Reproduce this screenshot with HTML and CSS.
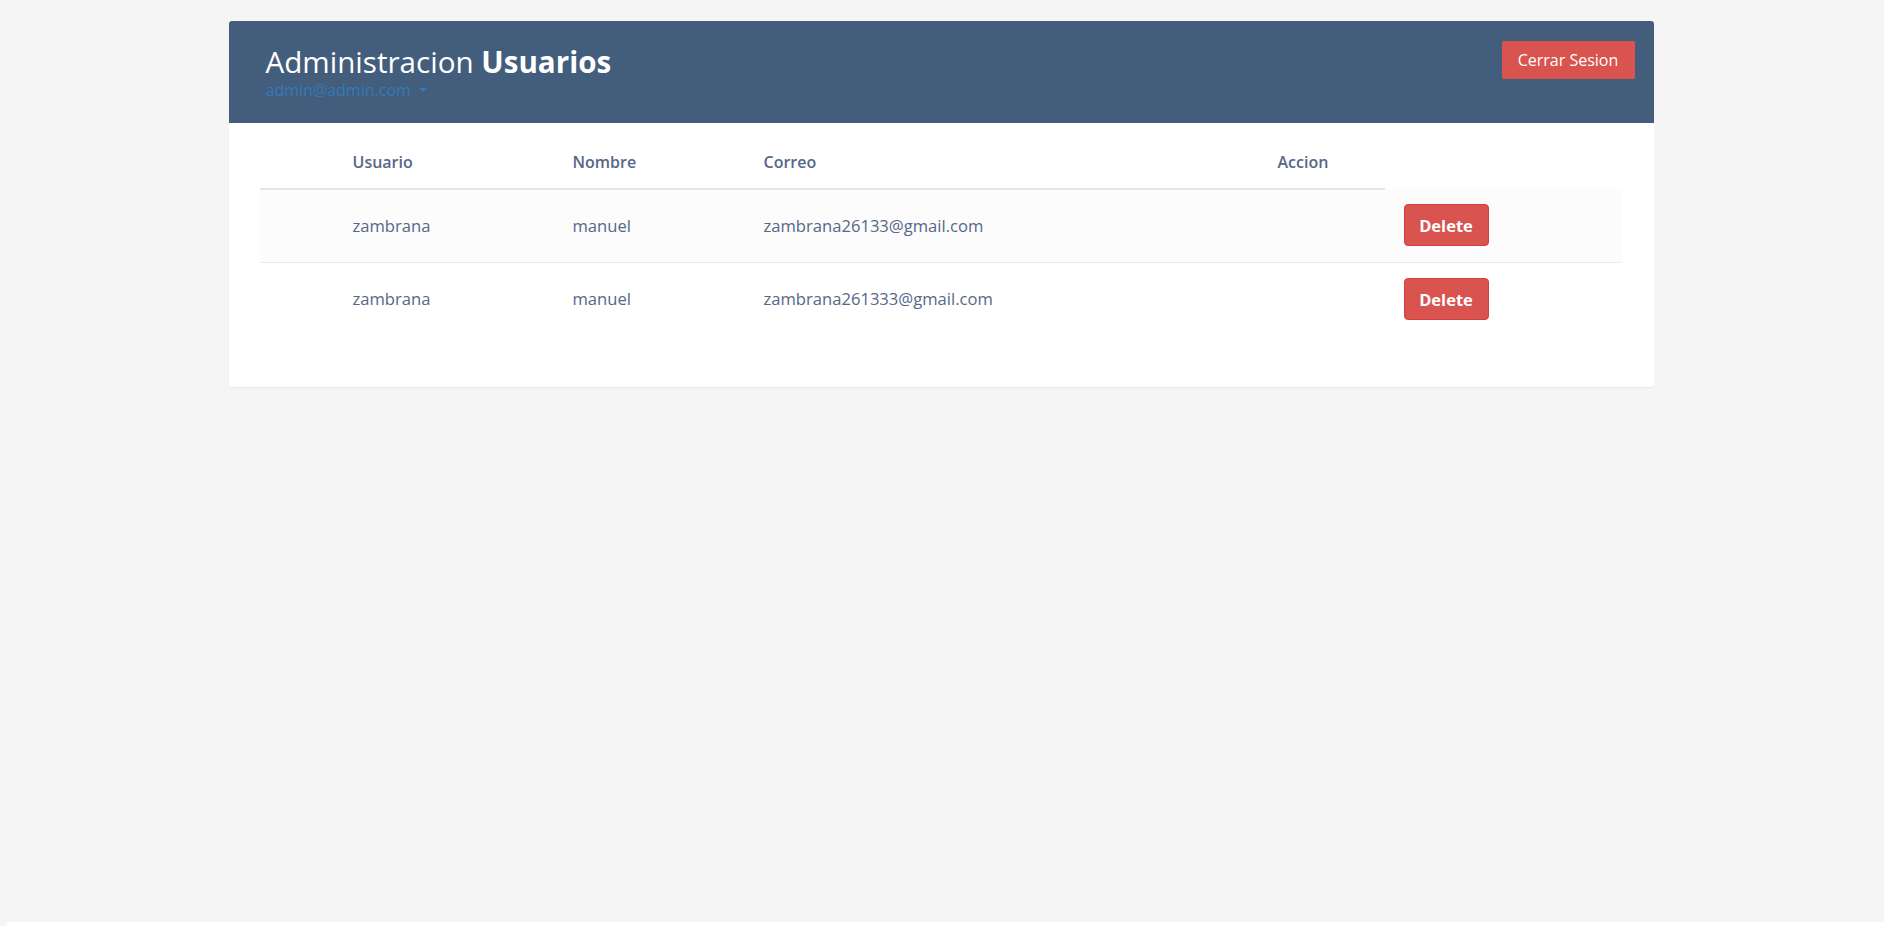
FILE: index.html
```html
<!DOCTYPE html>
<html lang="es">
<head>
<meta charset="utf-8">
<title>Administracion Usuarios</title>
<link rel="stylesheet" href="styles.css">
</head>
<body>
<main class="page">
  <section class="panel">
    <header class="panel-head">
      <div class="title-block">
        <h2 class="title">Administracion <b>Usuarios</b></h2>
        <a class="account" href="#">admin@admin.com <span class="caret"></span></a>
      </div>
      <button class="btn-logout" type="button">Cerrar Sesion</button>
    </header>
    <div class="table-area">
      <table class="users">
        <colgroup>
          <col class="c1"><col class="c2"><col class="c3"><col class="c4"><col class="c5"><col class="c6">
        </colgroup>
        <thead>
          <tr><th></th><th>Usuario</th><th>Nombre</th><th>Correo</th><th>Accion</th></tr>
        </thead>
        <tbody>
          <tr class="striped">
            <td></td><td>zambrana</td><td>manuel</td><td>zambrana26133@gmail.com</td><td></td>
            <td class="act"><button class="btn-delete" type="button">Delete</button></td>
          </tr>
          <tr>
            <td></td><td>zambrana</td><td>manuel</td><td>zambrana261333@gmail.com</td><td></td>
            <td class="act"><button class="btn-delete" type="button">Delete</button></td>
          </tr>
        </tbody>
      </table>
    </div>
  </section>
</main>
<div class="bottom-strip"></div>
</body>
</html>
```
FILE: styles.css
```css
html, body {
  margin: 0;
  padding: 0;
}
body {
  background: #f5f5f5;
  font-family: "Open Sans", "Noto Sans", sans-serif;
  color: #566787;
  font-size: 16px;
}
.page {
  min-height: 922px;
  box-sizing: border-box;
  padding-top: 21px;
  padding-right: 2px;
  display: flex;
  justify-content: center;
  align-items: flex-start;
}
.panel {
  width: 1425px;
  background: #fff;
  border-radius: 3px;
  box-shadow: 0 1px 1px rgba(0,0,0,.05);
}
.panel-head {
  height: 102px;
  box-sizing: border-box;
  background: #435d7d;
  border-radius: 3px 3px 0 0;
  padding: 20px 19px 0 37px;
  display: flex;
  justify-content: space-between;
  align-items: flex-start;
}
.title-block {
  margin-top: 4px;
  display: flex;
  flex-direction: column;
}
.title {
  margin: 0;
  font-size: 29.6px;
  line-height: 33px;
  font-weight: 400;
  color: #fff;
}
.title b {
  font-weight: 700;
}
.account {
  margin-top: 2px;
  font-size: 16px;
  line-height: 20px;
  color: #337ab7;
  text-decoration: none;
  display: flex;
  align-items: center;
}
.caret {
  display: inline-block;
  width: 0;
  height: 0;
  margin-left: 8px;
  border-top: 4px solid #337ab7;
  border-left: 4px solid transparent;
  border-right: 4px solid transparent;
}
.btn-logout {
  width: 133px;
  height: 38px;
  border: none;
  border-radius: 2px;
  background: #d9534f;
  color: #fff;
  font-family: inherit;
  font-size: 16px;
  padding: 0;
}
.table-area {
  padding: 13px 32px 51px 31px;
}
.users {
  width: 1362px;
  table-layout: fixed;
  border-collapse: collapse;
}
.c1 { width: 85px; }
.c2 { width: 220px; }
.c3 { width: 191px; }
.c4 { width: 514px; }
.c5 { width: 115px; }
.c6 { width: 237px; }
.users th {
  text-align: left;
  font-size: 16px;
  font-weight: 600;
  padding: 15px 8px;
  line-height: 22px;
  border-bottom: 2px solid #e6e6e6;
}
.users td {
  font-size: 16.6px;
  padding: 15px 8px 16px;
  line-height: 22px;
  vertical-align: middle;
  border-top: 1px solid #e9e9e9;
}
.users tbody tr:first-child td {
  border-top: none;
}
.users tr.striped td {
  background: #fcfcfc;
}
.users td.act {
  padding-left: 19px;
}
.btn-delete {
  display: block;
  width: 85px;
  height: 42px;
  border: 1px solid #d43f3a;
  border-radius: 4px;
  background: #d9534f;
  color: #fff;
  font-family: inherit;
  font-size: 16.5px;
  font-weight: 700;
  padding: 0;
}
.bottom-strip {
  margin-left: 7px;
  height: 4px;
  background: #fff;
}
```
